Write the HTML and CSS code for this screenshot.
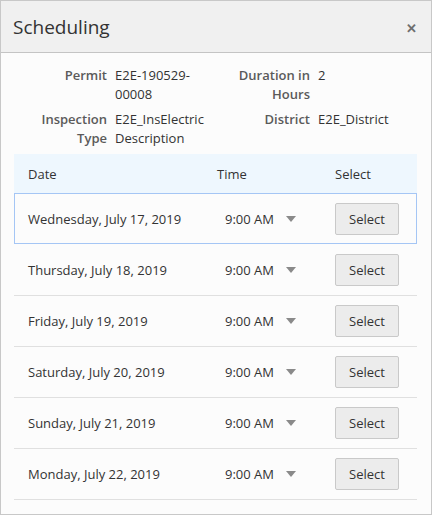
FILE: index.html
```html
<!DOCTYPE html>
<html lang="en">
<head>
    <meta charset="UTF-8">
    <meta name="viewport" content="width=device-width, initial-scale=1.0">
    <title>Scheduling</title>
    <link rel="stylesheet" href="styles.css">
</head>
<body>

<div class="dialog">
    <div class="dialog-header">
        <h1>Scheduling</h1>
        <span class="close">&#x2715;</span>
    </div>

    <div class="dialog-body">
        <div class="details">
            <div class="label">Permit</div>
            <div class="value">E2E-190529-00008</div>
            <div class="label">Duration in Hours</div>
            <div class="value">2</div>

            <div class="label">Inspection Type</div>
            <div class="value">E2E_InsElectric Description</div>
            <div class="label">District</div>
            <div class="value">E2E_District</div>
        </div>

        <div class="slots">
            <div class="slot-head">
                <div class="col-date">Date</div>
                <div class="col-time">Time</div>
                <div class="col-select">Select</div>
            </div>

            <div class="slot current">
                <div class="col-date">Wednesday, July 17, 2019</div>
                <div class="col-time"><span class="time">9:00 AM</span><span class="caret"></span></div>
                <div class="col-select"><button>Select</button></div>
            </div>
            <div class="slot">
                <div class="col-date">Thursday, July 18, 2019</div>
                <div class="col-time"><span class="time">9:00 AM</span><span class="caret"></span></div>
                <div class="col-select"><button>Select</button></div>
            </div>
            <div class="slot">
                <div class="col-date">Friday, July 19, 2019</div>
                <div class="col-time"><span class="time">9:00 AM</span><span class="caret"></span></div>
                <div class="col-select"><button>Select</button></div>
            </div>
            <div class="slot">
                <div class="col-date">Saturday, July 20, 2019</div>
                <div class="col-time"><span class="time">9:00 AM</span><span class="caret"></span></div>
                <div class="col-select"><button>Select</button></div>
            </div>
            <div class="slot">
                <div class="col-date">Sunday, July 21, 2019</div>
                <div class="col-time"><span class="time">9:00 AM</span><span class="caret"></span></div>
                <div class="col-select"><button>Select</button></div>
            </div>
            <div class="slot">
                <div class="col-date">Monday, July 22, 2019</div>
                <div class="col-time"><span class="time">9:00 AM</span><span class="caret"></span></div>
                <div class="col-select"><button>Select</button></div>
            </div>
        </div>
    </div>
</div>

</body>
</html>
```

FILE: styles.css
```css
body {
    margin: 0;
    font-family: "Open Sans", "Noto Sans", sans-serif;
    font-size: 13px;
    color: #333;
    background: #fff;
}
.dialog {
    width: 430px;
    height: 513px;
    border: 1px solid #c8c8c8;
    background: #fcfcfc;
    overflow: hidden;
}
.dialog-header {
    display: flex;
    align-items: center;
    justify-content: space-between;
    height: 51px;
    padding: 0 14px 0 12px;
    background: #f0f0f0;
    border-bottom: 1px solid #c4c4c4;
}
.dialog-header h1 {
    margin: 0;
    font-size: 19px;
    font-weight: normal;
    color: #333;
}
.close {
    font-size: 13px;
    font-weight: bold;
    color: #6e6e6e;
    margin-top: 3px;
}
.dialog-body {
    padding: 12px 14px 0 13px;
}
.details {
    display: grid;
    grid-template-columns: 93px 100px 87px 1fr;
    column-gap: 8px;
    row-gap: 6px;
    line-height: 19px;
    margin-bottom: 6px;
    padding-top: 1px;
}
.details .label {
    text-align: right;
    font-weight: 600;
    color: #5a5a5a;
}
.details .value {
    color: #333;
}
.slots {
    width: 403px;
}
.slot-head {
    display: flex;
    align-items: center;
    height: 39px;
    background: #eef7fe;
}
.slot {
    display: flex;
    align-items: center;
    height: 50px;
    border-bottom: 1px solid #e0e0e0;
}
.slot.current {
    height: 49px;
    border: 1px solid #a5c6f5;
    margin-bottom: 1px;
}
.col-date {
    width: 189px;
    padding-left: 14px;
}
.slot.current .col-date {
    padding-left: 13px;
}
.col-time {
    width: 118px;
    display: flex;
    align-items: center;
}
.slot .col-time {
    padding-left: 8px;
    width: 110px;
}
.caret {
    margin-left: 12px;
    width: 0;
    height: 0;
    border-left: 5px solid transparent;
    border-right: 5px solid transparent;
    border-top: 6px solid #8a8a8a;
}
.col-select button {
    width: 64px;
    height: 32px;
    font-family: inherit;
    font-size: 13px;
    color: #333;
    background: #ececec;
    border: 1px solid #c9c9c9;
    border-radius: 2px;
    padding: 0;
}
```
